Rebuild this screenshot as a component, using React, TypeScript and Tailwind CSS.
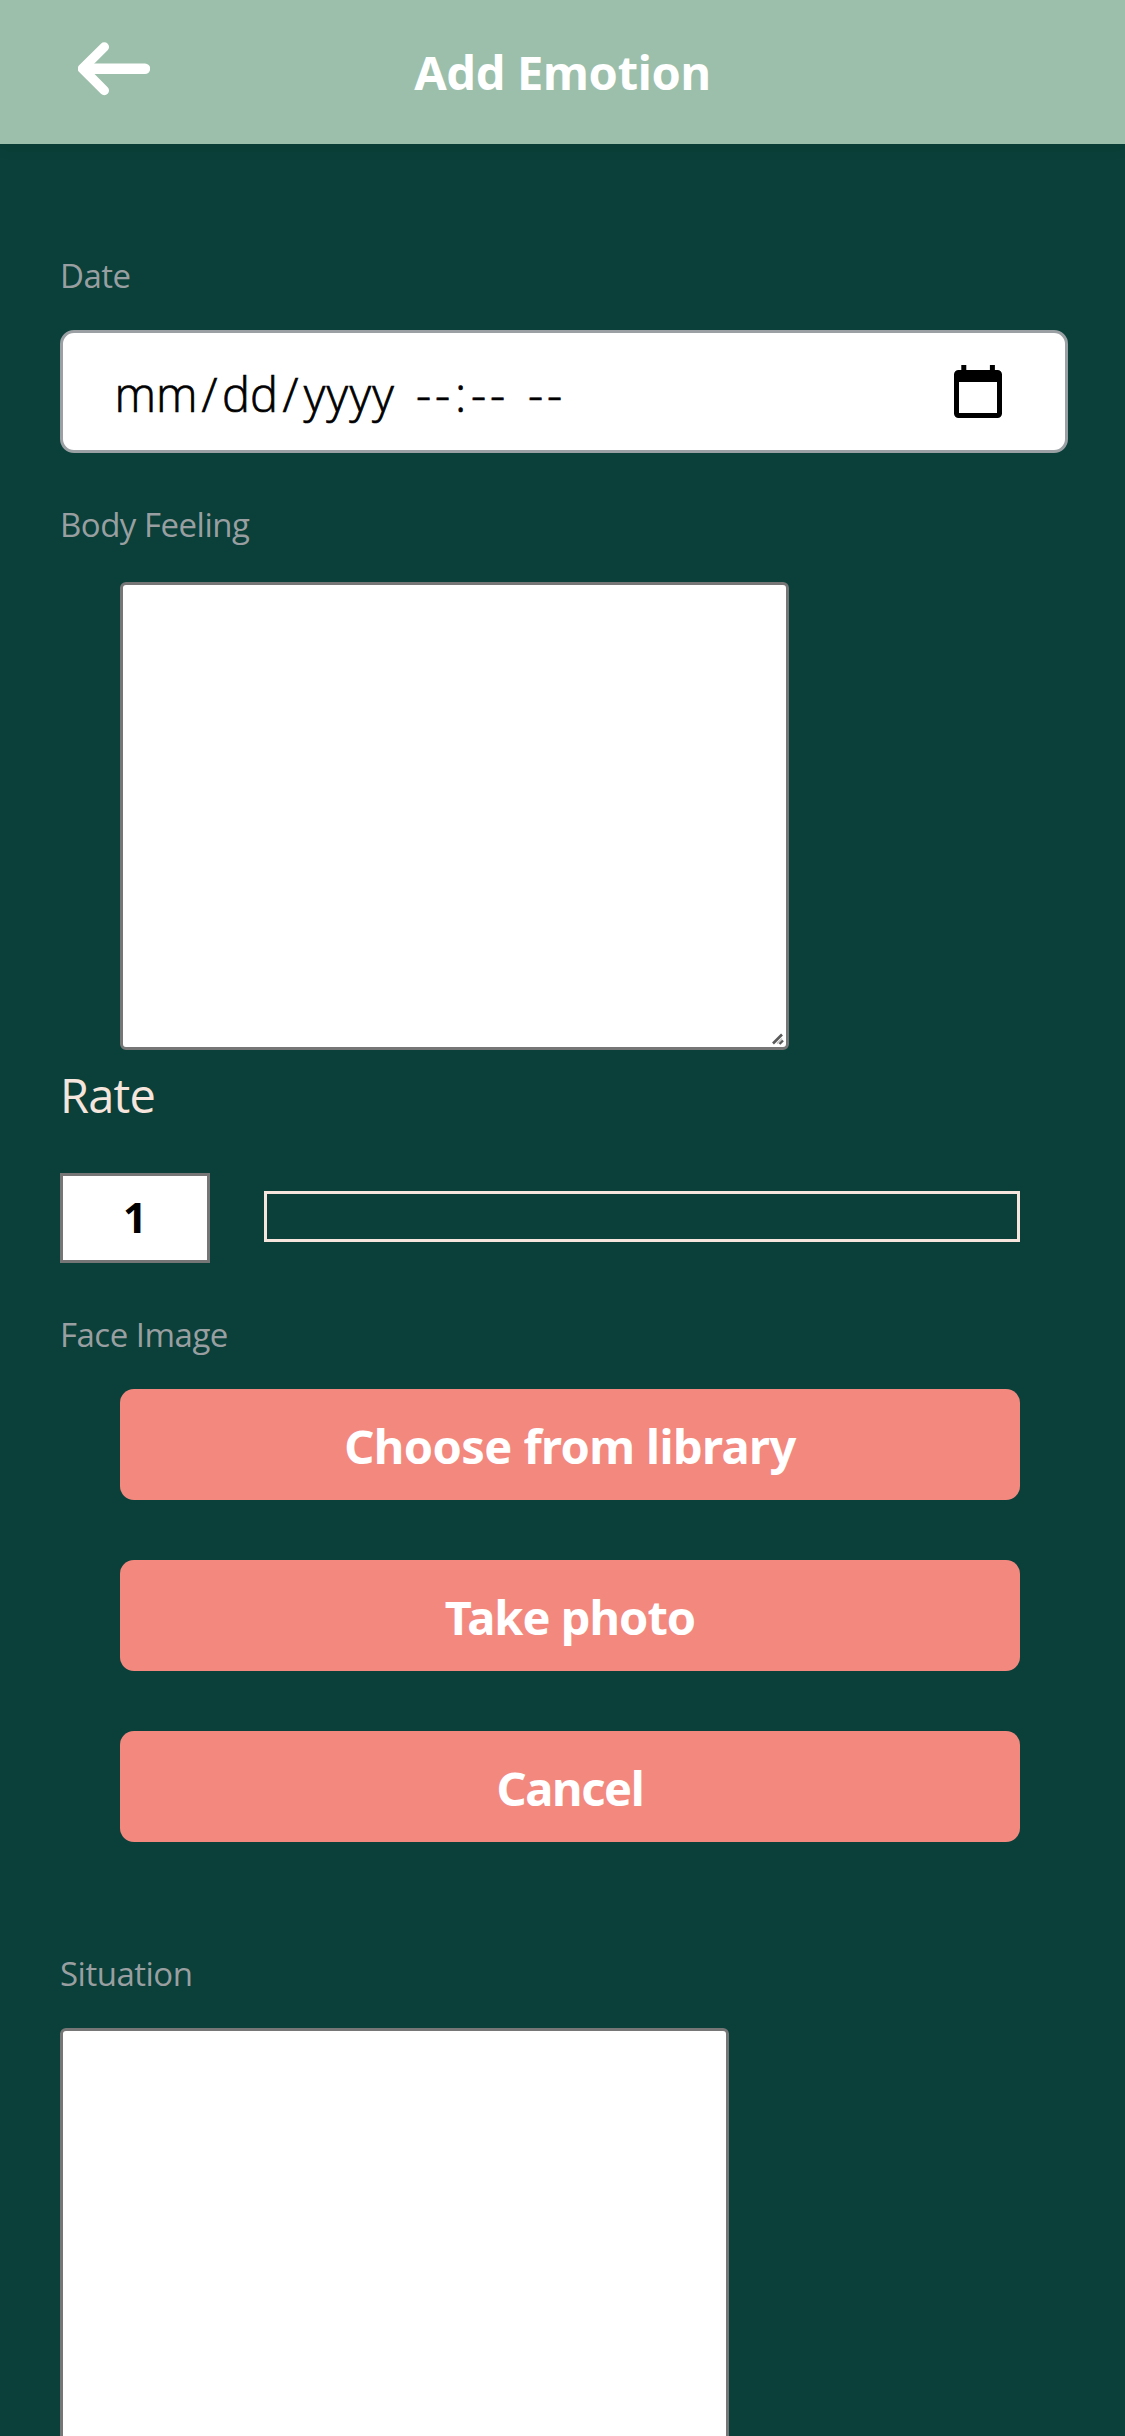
import type { ReactNode } from "react";

function Label({ children, className = "" }: { children: ReactNode; className?: string }) {
  return (
    <div className={`ml-[60px] h-10 pt-px text-[33px] leading-[40px] tracking-[-0.5px] text-[#999fa1] ${className}`}>
      {children}
    </div>
  );
}

function BackArrow() {
  return (
    <svg className="ml-[78px] h-[60px] w-[72px]" viewBox="78 39 72 60" fill="none" stroke="#fff" strokeLinecap="round" strokeLinejoin="round">
      <path d="M85 68.7H145" strokeWidth="10.5" />
      <path d="M104.3 47L82.5 68.7L104.3 90.5" strokeWidth="9.5" />
      <path d="M88 63L82.5 68.7L88 74.5Z" fill="#fff" strokeWidth="8" />
    </svg>
  );
}

function CalendarIcon() {
  return (
    <svg className="mr-[63px] mt-0 h-[54px] w-12" viewBox="0 0 48 54">
      <path
        fill="#000"
        fillRule="evenodd"
        d="M7.3 0h5v5h23.6V0h5v5H43.5a4.5 4.5 0 0 1 4.5 4.5V48.500a4.500 4.500 0 0 1-4.500 4.500H4.500A4.500 4.500 0 0 1 0 48.500V9.500A4.500 4.500 0 0 1 4.500 5H7.300ZM5 17V48H43V17Z"
      />
    </svg>
  );
}

function TextBox({ className = "", children }: { className?: string; children?: ReactNode }) {
  return (
    <div className={`flex w-[669px] items-end justify-end rounded-[6px] border-[3px] border-[#767676] bg-white ${className}`}>
      {children}
    </div>
  );
}

function ActionButton({ children, className }: { children: ReactNode; className: string }) {
  return (
    <button className={`block h-[111px] w-full rounded-[14px] bg-[#f3887f] pt-[3px] text-center font-['Noto_Sans',sans-serif] text-[47px] font-bold leading-[108px] text-white ${className}`}>
      {children}
    </button>
  );
}

function Dashes({ className = "" }: { className?: string }) {
  return (
    <span className={`flex w-[38px] ${className}`}>
      <span className="w-[19px]">-</span>
      <span className="w-[19px]">-</span>
    </span>
  );
}

function DateField() {
  return (
    <div className="ml-[60px] mt-[35px] flex h-[123px] w-[1008px] items-center justify-between rounded-[14px] border-[3px] border-[#9aa0a3] bg-white">
      <div className="ml-[50px] flex pt-[5px] text-center text-[47px] font-light leading-[60px] text-black [-webkit-text-stroke:0.7px_#000]">
        <span className="w-[86px]">mm</span>
        <span className="w-[21px]">/</span>
        <span className="w-[60px]">dd</span>
        <span className="w-[21px]">/</span>
        <span className="w-[97px] tracking-[1.3px]">yyyy</span>
        <Dashes className="ml-[16px]" />
        <span className="w-[17px]">:</span>
        <Dashes />
        <Dashes className="ml-[19px]" />
      </div>
      <CalendarIcon />
    </div>
  );
}

export default function App() {
  return (
    <div className="h-[2436px] w-[1125px] overflow-hidden bg-[#0a4039] font-['Open_Sans','Noto_Sans',sans-serif]">
      <header className="grid h-36 grid-cols-[1fr_auto_1fr] bg-[#9cbfab] shadow-[0_3px_15px_rgba(0,0,0,0.08)]">
        <div className="pt-[39px]"><BackArrow /></div>
        <h1 className="font-['Noto_Sans',sans-serif] text-[47px] font-bold leading-[144px] tracking-[-0.3px] text-white">Add Emotion</h1>
      </header>

      <main>
        <Label className="mt-[111px]">Date</Label>
        <DateField />

        <Label className="mt-[51px]">Body Feeling</Label>
        <TextBox className="ml-[120px] mt-[38px] h-[468px]">
          <svg className="mb-[2px] mr-[2px] h-3 w-3" viewBox="0 0 12 12" stroke="#5a5a5a">
            <path d="M1 10.500L10 1.500" strokeWidth="2.6" />
            <path d="M5 10.500L10 5.500" stroke="#c4c4c4" strokeWidth="1.500" />
            <path d="M7.500 11L11 7.500" strokeWidth="2.400" />
          </svg>
        </TextBox>

        <div className="ml-[60px] mt-[15px] h-[60px] text-[47px] leading-[60px] tracking-[-0.8px] text-[#f5e5dd]">Rate</div>
        <div className="ml-[60px] mt-12 flex h-[90px] items-start">
          <div className="h-[90px] w-[150px] border-[3px] border-[#767676] bg-white text-center font-['Noto_Sans',sans-serif] text-[42px] font-bold leading-[82px] text-black">1</div>
          <div className="ml-[54px] mt-[18px] h-[51px] w-[756px] border-[3px] border-[#f5e5dd]" />
        </div>

        <Label className="mt-[51px]">Face Image</Label>
        <div className="ml-[120px] mt-[35px] flex w-[900px] flex-col gap-[60px]">
          <ActionButton className="tracking-[-0.6px]">Choose from library</ActionButton>
          <ActionButton className="tracking-[-1px]">Take photo</ActionButton>
          <ActionButton className="tracking-[-1.4px]">Cancel</ActionButton>
        </div>

        <Label className="mt-[111px]">Situation</Label>
        <TextBox className="ml-[60px] mt-[35px] h-[468px]" />
      </main>
    </div>
  );
}
